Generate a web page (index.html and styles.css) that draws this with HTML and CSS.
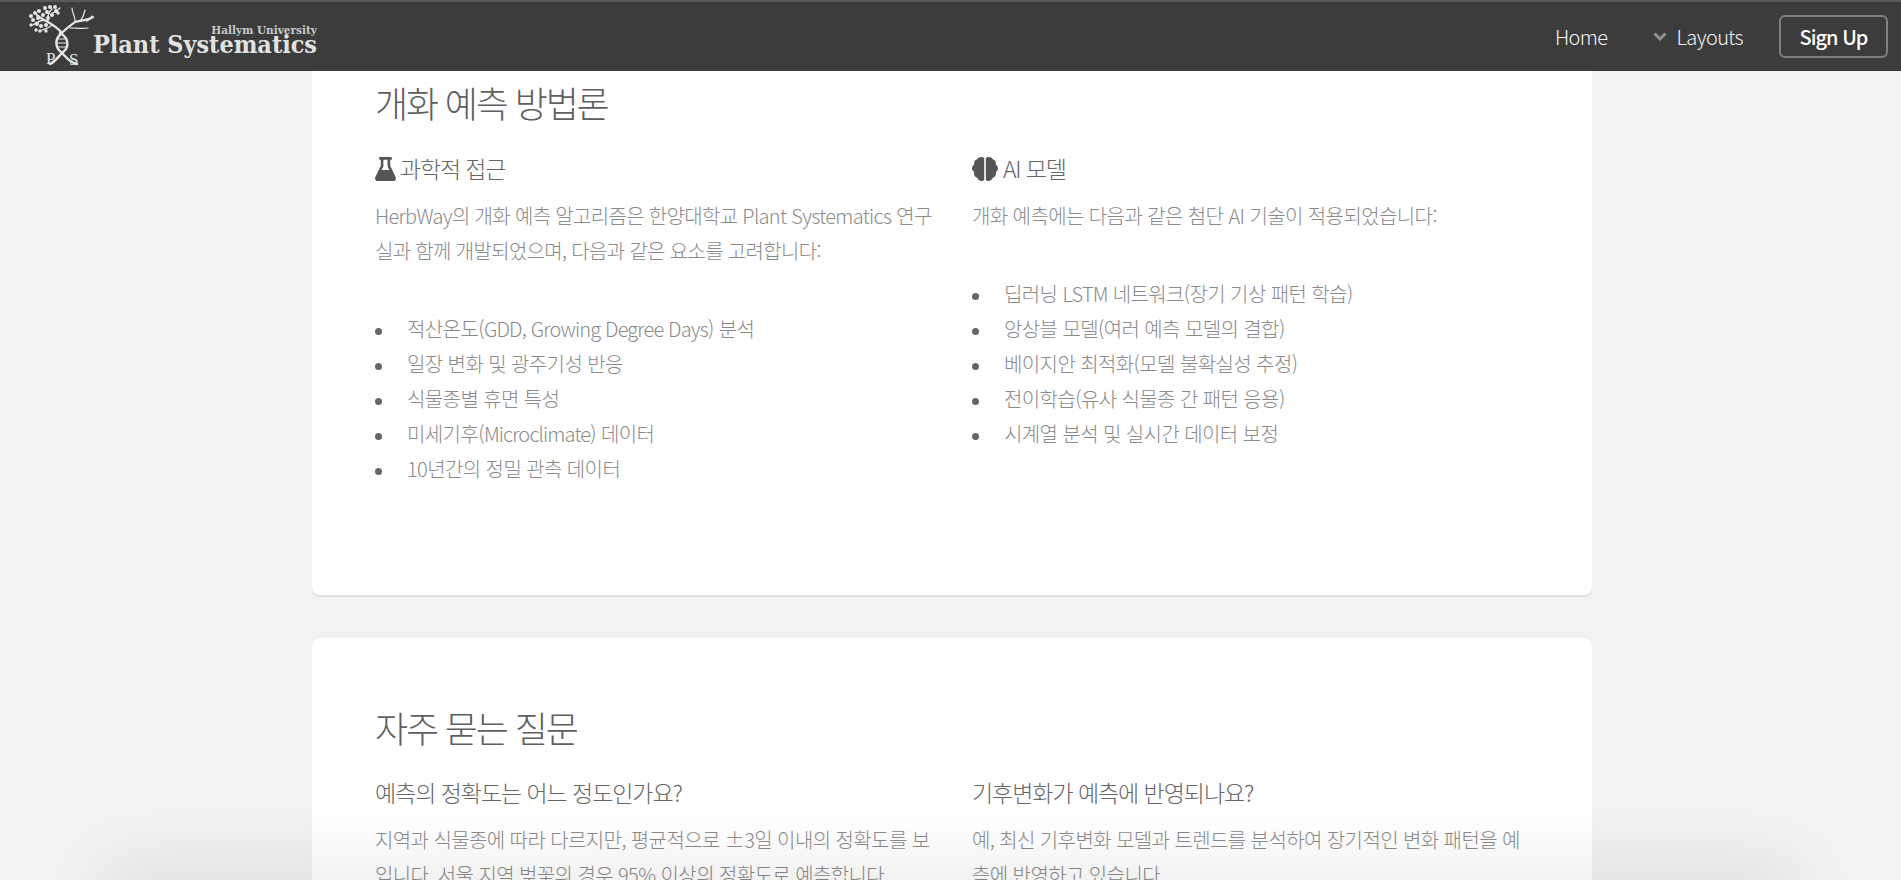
FILE: index.html
```html
<!DOCTYPE html>
<html lang="ko">
<head>
<meta charset="utf-8">
<title>개화 예측 방법론</title>
<link rel="stylesheet" href="styles.css">
</head>
<body>
<header class="navbar">
  <a class="brand">
    <svg class="brand-mark" viewBox="28 2 68 66" width="68" height="66" aria-hidden="true">
      <g fill="none" stroke="#e6e6e6" stroke-linecap="round">
        <path stroke-width="2.200" d="M62 33C58 28 53 25 48 22C44 20 41 19 37 15"/>
        <path stroke-width="1.300" d="M48 22C47 17 49 12 52 9M44 20C40 21 36 22 33 25M52 25C49 28 45 29 42 30M51 14C54 12 57 11 60 8"/>
        <path stroke-width="2.200" d="M60 35C65 29 70 26 75 22C80 20 87 21 93 17"/>
        <path stroke-width="1.200" d="M75 22C76 17 72 14 72 8M80 21C83 18 84 14 85 10M70 28C76 28 82 29 88 28M86 21C89 21 90 19 92 16"/>
        <path stroke-width="2.400" d="M62 33C55 38 54 47 62 53C66 57 70 63 77 64"/>
        <path stroke-width="2.400" d="M60 33C69 38 70 47 62 53C58 57 55 62 50 64"/>
        <path stroke-width="1.100" d="M58 39H66M57 43H67M58 47H66"/>
      </g>
      <g fill="#e6e6e6">
        <circle cx="31" cy="16" r="2"/><circle cx="35" cy="13" r="2"/><circle cx="39" cy="11" r="2"/><circle cx="33" cy="20" r="2"/>
        <circle cx="38" cy="18" r="2"/><circle cx="43" cy="15" r="2"/><circle cx="47" cy="12" r="2"/><circle cx="45" cy="8" r="2"/>
        <circle cx="50" cy="7" r="2"/><circle cx="55" cy="7" r="2"/><circle cx="56" cy="11" r="2"/><circle cx="52" cy="15" r="2"/>
        <circle cx="58" cy="13" r="1.700"/><circle cx="48" cy="18" r="2"/><circle cx="37" cy="24" r="2"/><circle cx="41" cy="26" r="2"/>
        <circle cx="46" cy="25" r="2"/><circle cx="36" cy="30" r="1.700"/><circle cx="40" cy="31" r="1.700"/><circle cx="46" cy="31" r="1.700"/><circle cx="31" cy="25" r="1.700"/>
      </g>
      <text class="brand-ps" x="46" y="64">P</text>
      <text class="brand-ps" x="69" y="65">S</text>
    </svg>
    <span class="brand-text">
      <span class="brand-sub">Hallym University</span>
      <span class="brand-name">Plant Systematics</span>
    </span>
  </a>
  <nav class="nav">
    <a class="nav-link">Home</a>
    <a class="nav-link nav-drop">
      <svg class="chev" viewBox="0 0 14 9" width="14" height="9" aria-hidden="true"><path d="M1.500 1.500 7 7 12.500 1.500" fill="none" stroke="#8f8f8f" stroke-width="3"/></svg>
      Layouts
    </a>
    <a class="signup">Sign Up</a>
  </nav>
</header>

<main class="page">
  <section class="card card-first">
    <h2>개화 예측 방법론</h2>
    <div class="cols">
      <div>
        <h4><svg class="ico" viewBox="0 0 20 22" width="21" height="24" preserveAspectRatio="none" aria-hidden="true"><path fill="#555" d="M4 0H16V2.500H14.500V8L19.700 18.500C20.500 20.300 19.300 22 17.500 22H2.500C.7 22-.5 20.300.3 18.500L5.500 8V2.500H4ZM8 2.500V8.600L6.300 12H13.700L12 8.600V2.500Z"/></svg> 과학적 접근</h4>
        <p class="mixed">HerbWay의 개화 예측 알고리즘은 한양대학교 Plant Systematics 연구실과 함께 개발되었으며, 다음과 같은 요소를 고려합니다:</p>
        <ul>
          <li>적산온도(<span class="la">GDD, Growing Degree Days</span>) 분석</li>
          <li>일장 변화 및 광주기성 반응</li>
          <li>식물종별 휴면 특성</li>
          <li>미세기후(<span class="la">Microclimate</span>) 데이터</li>
          <li>10년간의 정밀 관측 데이터</li>
        </ul>
      </div>
      <div>
        <h4><svg class="ico ico-brain" viewBox="0 0 26 24" width="26" height="24" aria-hidden="true"><path fill="#555" d="M12.200 1.500V22.500C12.200 23.400 11 24 9.500 24C7.500 24 5.800 22.700 5.300 20.800C3.300 20.300 2 18.500 2 16.500C2 16 2.100 15.500 2.200 15C.9 14.200 0 12.700 0 11.500C0 9.800 1 8.300 2.400 7.600C2.200 7.100 2.100 6.600 2.100 6C2.100 4.200 3.400 2.700 5.200 2.300C5.900 .9 7.500 0 9.500 0C11 0 12.200 .6 12.200 1.500ZM13.800 1.500C13.800 .6 15 0 16.500 0C18.500 0 20.100 .9 20.800 2.300C22.600 2.700 23.900 4.200 23.900 6C23.900 6.600 23.800 7.100 23.600 7.600C25 8.300 26 9.800 26 11.500C26 12.700 25.100 14.200 23.800 15C23.900 15.500 24 16 24 16.500C24 18.500 22.700 20.300 20.700 20.800C20.200 22.700 18.500 24 16.500 24C15 24 13.800 23.400 13.800 22.500Z"/></svg> AI 모델</h4>
        <p>개화 예측에는 다음과 같은 첨단 AI 기술이 적용되었습니다:</p>
        <ul>
          <li>딥러닝 <span class="la">LSTM</span> 네트워크(장기 기상 패턴 학습)</li>
          <li>앙상블 모델(여러 예측 모델의 결합)</li>
          <li>베이지안 최적화(모델 불확실성 추정)</li>
          <li>전이학습(유사 식물종 간 패턴 응용)</li>
          <li>시계열 분석 및 실시간 데이터 보정</li>
        </ul>
      </div>
    </div>
  </section>

  <section class="card card-second">
    <h2>자주 묻는 질문</h2>
    <div class="cols">
      <div>
        <h5>예측의 정확도는 어느 정도인가요?</h5>
        <p>지역과 식물종에 따라 다르지만, 평균적으로 ±3일 이내의 정확도를 보입니다. 서울 지역 벚꽃의 경우 95% 이상의 정확도로 예측합니다.</p>
      </div>
      <div>
        <h5>기후변화가 예측에 반영되나요?</h5>
        <p>예, 최신 기후변화 모델과 트렌드를 분석하여 장기적인 변화 패턴을 예측에 반영하고 있습니다.</p>
      </div>
    </div>
  </section>
</main>
<div class="bottom-shade"></div>
</body>
</html>
```
FILE: styles.css
```css
* { box-sizing: border-box; }
html, body { margin: 0; height: 880px; overflow: hidden; }
body {
  background: #f2f2f2;
  color: #8a8a8a;
  font-family: "Noto Sans CJK KR", "Noto Sans", sans-serif;
  font-weight: 300;
  font-size: 20px;
  line-height: 35px;
  letter-spacing: -0.03em;
}
.la { letter-spacing: -0.042em; }
.mixed { letter-spacing: -0.034em; }
.navbar {
  height: 71px;
  background: #3c3c3c;
  border-top: 2px solid #5c5759;
  display: flex;
  align-items: center;
  justify-content: space-between;
  padding: 0 13px 0 28px;
  position: relative;
  z-index: 2;
}
.brand { display: flex; align-items: flex-end; height: 69px; }
.brand-mark { display: block; flex: none; align-self: flex-start; }
.brand-ps {
  font-family: "Liberation Serif", serif;
  font-size: 17px;
  letter-spacing: 0;
  fill: #e6e6e6;
}
.brand-text {
  display: flex;
  flex-direction: column;
  align-items: flex-end;
  margin: 0 0 17px -3px;
  font-family: "DejaVu Serif", serif;
  font-stretch: condensed;
  font-weight: 700;
  letter-spacing: 0;
  color: #e2e2e2;
}
.brand-sub { font-size: 11.700px; line-height: 11px; color: #c8c8c8; }
.brand-name { font-size: 24.900px; line-height: 18px; }
.nav { display: flex; align-items: center; color: #f4f4f4; font-size: 20px; letter-spacing: -0.03em; }
.nav-link { line-height: 30px; }
.nav-drop { display: flex; align-items: center; gap: 10px; margin-left: 45px; }
.chev { display: block; margin-bottom: 1px; }
.signup {
  margin-left: 36px;
  width: 109px;
  height: 43px;
  border: 2px solid #808080;
  border-radius: 6px;
  display: flex;
  align-items: center;
  justify-content: center;
  color: #fff;
  font-weight: 500;
  letter-spacing: -0.05em;
}
.page { display: flex; flex-direction: column; gap: 43px; width: 1280px; margin: 0 0 0 312px; }
.card {
  background: #fff;
  border-radius: 8px;
  box-shadow: 0 2px 1px rgba(0,0,0,.08);
  padding: 62px 63px 0;
}
.card-first { height: 524px; padding-top: 4px; border-radius: 0 0 8px 8px; }
h2 { margin: 0; font-size: 36px; line-height: 54px; font-weight: 300; color: #5f5f5f; letter-spacing: -0.06em; }
.cols { display: grid; grid-template-columns: 564px 564px; gap: 33px; margin-top: 21px; }
.card-first .cols { margin-top: 22px; }
h4 { margin: 0 0 12px; font-size: 23px; line-height: 35px; font-weight: 300; color: #666; letter-spacing: -0.05em; display: flex; align-items: center; gap: 4px; }
h5 { margin: 0 0 12px; font-size: 23px; line-height: 35px; font-weight: 300; color: #666; letter-spacing: -0.046em; }
p { margin: 0; max-width: 560px; }
ul { margin: 43px 0 0; padding: 0; list-style: none; }
li::before {
  content: "";
  display: inline-block;
  width: 7px;
  height: 7px;
  border-radius: 50%;
  background: #666;
  margin-right: 25px;
  vertical-align: middle;
}
.ico { display: block; flex: none; }
.ico-brain { margin-right: 1px; }
.bottom-shade {
  position: fixed;
  left: 110px;
  right: 110px;
  bottom: -30px;
  height: 30px;
  box-shadow: 0 0 70px rgba(0,0,0,.17);
}
```
